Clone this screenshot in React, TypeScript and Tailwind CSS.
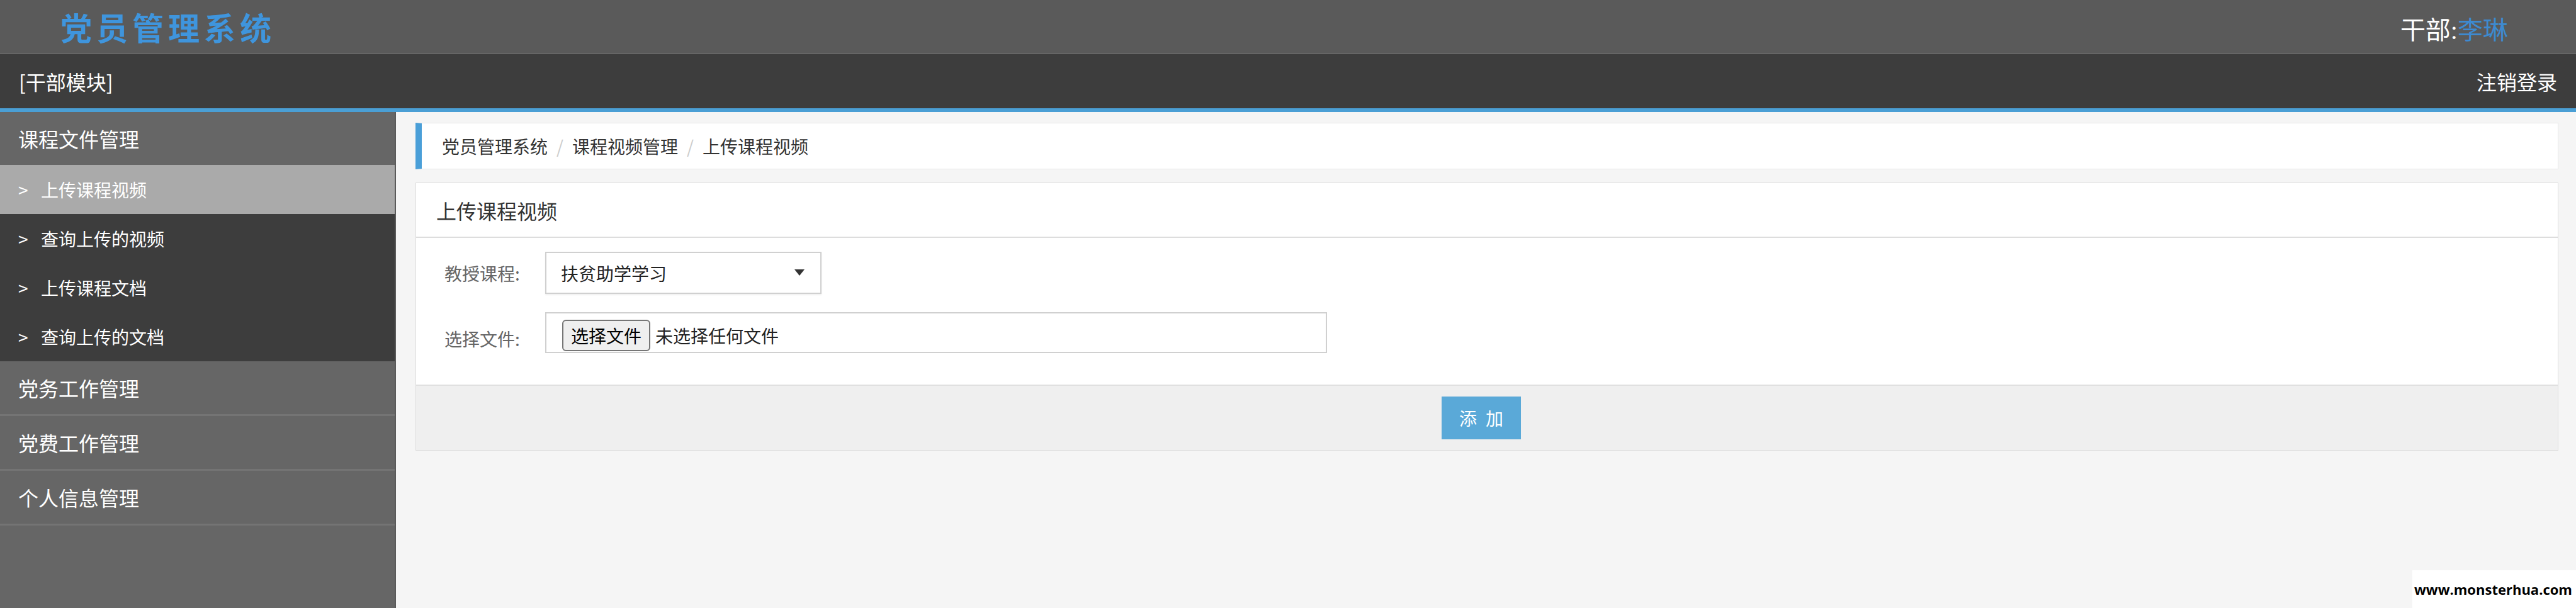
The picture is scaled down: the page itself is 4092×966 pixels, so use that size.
import React from 'react';

const subItems = ['上传课程视频', '查询上传的视频', '上传课程文档', '查询上传的文档'];
const groups = ['党务工作管理', '党费工作管理', '个人信息管理'];

export default function App() {
  return (
    <div className="relative flex flex-col h-screen w-full bg-[#f5f5f5] font-['Noto_Sans_CJK_SC',sans-serif]">
      {/* top bar */}
      <div className="flex items-center justify-between h-[86px] shrink-0 bg-[#5a5a5a] border-b-2 border-[#666]">
        <div className="pl-[96px] text-[50px] font-bold tracking-[7px] text-[#3f95dd] leading-none">
          党员管理系统
        </div>
        <div className="mt-[14px] pr-[108px] text-[40px] leading-none font-['Liberation_Serif','Noto_Sans_CJK_SC',serif] text-white">
          干部:<span className="text-[#3d8ad0]">李琳</span>
        </div>
      </div>
      <div className="flex items-center justify-between h-[92px] shrink-0 bg-[#3d3d3d] px-[30px] text-[32px] text-white border-b-[6px] border-[#4a9fd5]">
        <span>[干部模块]</span>
        <span>注销登录</span>
      </div>

      <div className="flex flex-1">
        {/* sidebar */}
        <div className="w-[629px] shrink-0 bg-[#666666] border-r-2 border-[#5a5a5a] text-white">
          <div className="flex items-center h-[84px] pl-[29px] text-[32px]">课程文件管理</div>
          {subItems.map((t, i) => (
            <div
              key={t}
              className={`flex items-center h-[78px] pl-[29px] text-[28px] ${i === 0 ? 'bg-[#aaaaaa]' : 'bg-[#3d3d3d]'}`}
            >
              <span className="w-[36px]">&gt;</span>
              <span>{t}</span>
            </div>
          ))}
          {groups.map((t) => (
            <div key={t} className="flex items-center h-[87px] pl-[29px] text-[32px] border-b-[3px] border-[#747474]">
              {t}
            </div>
          ))}
        </div>

        {/* main */}
        <div className="flex-1 pl-[31px] pr-[28px] pt-[17px]">
          <div className="flex items-center h-[74px] bg-white border border-[#e6e6e6] border-l-[10px] border-l-[#4a9fd8] pl-[32px] text-[28px] text-[#333]">
            <span>党员管理系统</span>
            <span className="px-[14px] text-[#ccc]">/</span>
            <span>课程视频管理</span>
            <span className="px-[14px] text-[#ccc]">/</span>
            <span>上传课程视频</span>
          </div>

          <div className="mt-[21px] bg-white border border-[#dddddd]">
            <div className="flex items-center h-[87px] px-[32px] text-[32px] text-[#333] border-b-2 border-[#dddddd]">
              上传课程视频
            </div>
            <div className="pt-[22px] pb-[50px] pl-[45px] flex flex-col gap-[29px]">
              <div className="flex items-center">
                <label className="w-[160px] text-[28px] text-[#666]">教授课程:</label>
                <div className="flex items-center justify-between w-[439px] h-[67px] border-2 border-[#d0d0d0] px-[23px] text-[28px] text-[#222] shadow-[0_2px_2px_rgba(0,0,0,0.06)]">
                  <span>扶贫助学学习</span>
                  <span className="w-0 h-0 border-l-[8px] border-r-[8px] border-t-[10px] border-l-transparent border-r-transparent border-t-[#333] mr-[2px] mb-[2px]" />
                </div>
              </div>
              <div className="flex items-center">
                <label className="w-[160px] text-[28px] text-[#666] mt-[18px]">选择文件:</label>
                <div className="flex items-start w-[1242px] h-[65px] border-2 border-[#d0d0d0] pl-[25px] pt-[10px] text-[28px]">
                  <span className="flex items-center h-[50px] px-[12px] bg-[#efefef] border-2 border-[#767676] rounded-[6px] text-black">
                    选择文件
                  </span>
                  <span className="ml-[8px] mt-[4px] text-[#222]">未选择任何文件</span>
                </div>
              </div>
            </div>
            <div className="flex items-center justify-center h-[104px] bg-[#efefef] border-t-2 border-[#e0e0e0]">
              <button className="w-[126px] h-[68px] mr-[18px] bg-[#5aa9d8] text-white text-[28px] tracking-[14px] pl-[14px]">
                添加
              </button>
            </div>
          </div>
        </div>
      </div>

      <div className="absolute right-0 bottom-0 flex items-center w-[260px] h-[60px] bg-white pl-[3px] whitespace-nowrap font-['Open_Sans',sans-serif] font-bold text-[22px] text-black">
        www.monsterhua.com
      </div>
    </div>
  );
}
